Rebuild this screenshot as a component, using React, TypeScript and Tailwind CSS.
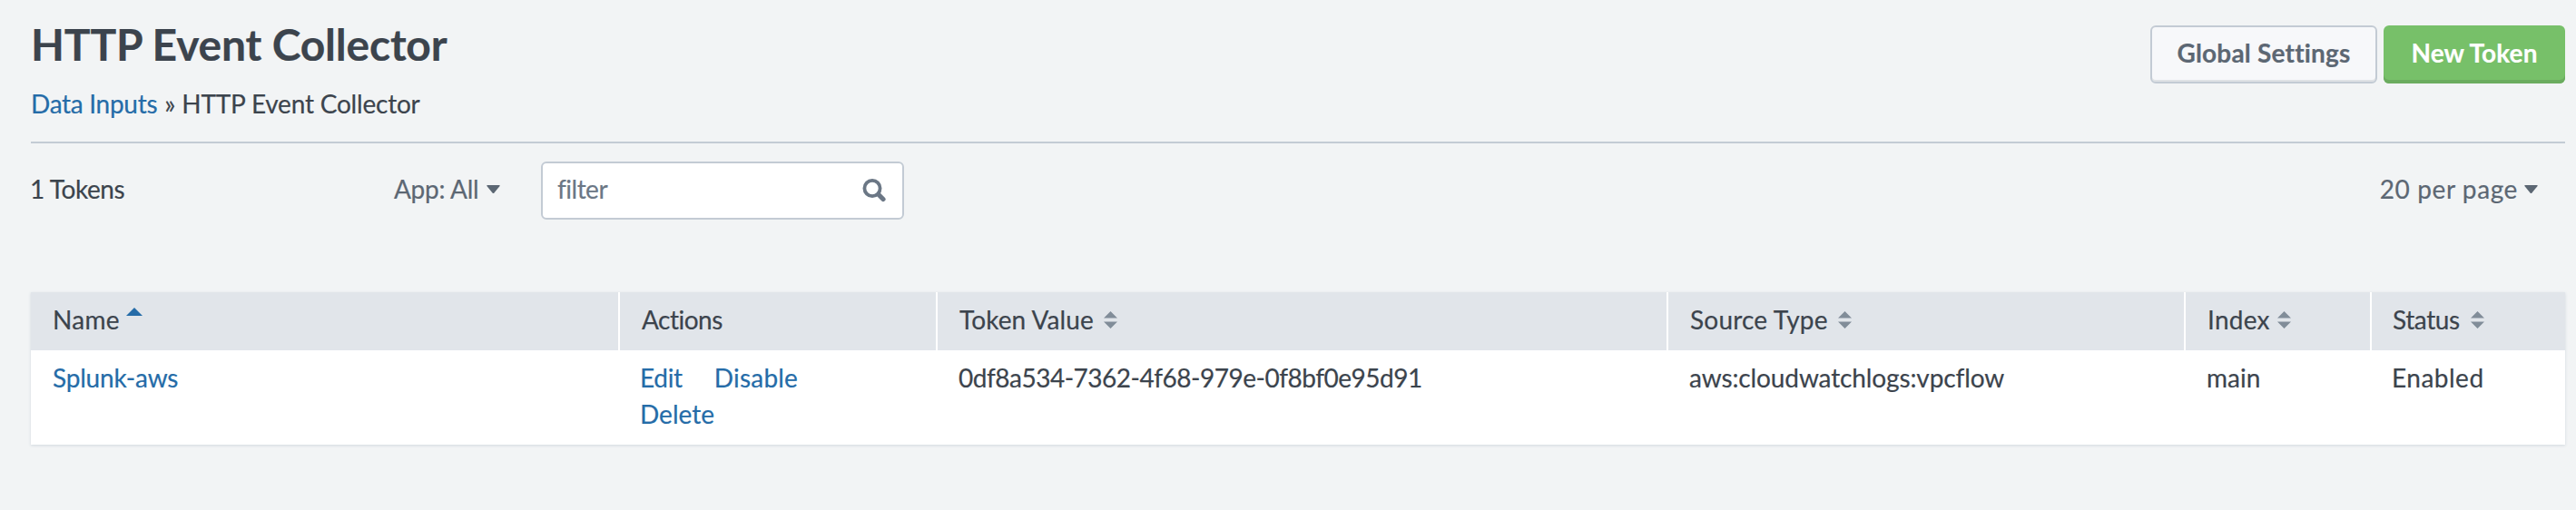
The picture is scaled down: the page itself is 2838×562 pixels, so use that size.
import React from "react";

function Caret() {
  return (
    <svg width="15" height="9" viewBox="0 0 15 9" className="fill-[#5c6773]">
      <path d="M1 0h13q1.2 0 .6 1L8.5 8.4q-1 1-2 0L.4 1Q-.2 0 1 0z" />
    </svg>
  );
}

function SortIcon() {
  return (
    <svg width="15" height="19" viewBox="0 0 15 19" className="mt-[11px] fill-[#818d99]">
      <path d="M7.5 0 15 7.5H0zM0 11.5h15L7.5 19z" />
    </svg>
  );
}

const headCell = "flex items-start border-r-2 border-white pt-[10px]";

export default function App() {
  return (
    <div
      className="h-[562px] w-[2838px] overflow-hidden bg-[#f2f4f5] pl-[34px] pr-3 text-[28px] leading-[40px] text-[#3c444d] [-webkit-text-stroke:0.2px]"
      style={{ fontFamily: "Lato, 'Liberation Sans', sans-serif" }}
    >
      <header className="flex h-[158px] justify-between border-b-2 border-[#c3cbd4]">
        <div className="pt-[21px]">
          <h1 className="text-[48px] font-bold leading-[56px] tracking-[-0.2px]">HTTP Event Collector</h1>
          <nav className="mt-[17px] flex whitespace-pre">
            <a className="tracking-[-0.3px] text-[#256ca8]">Data Inputs</a>
            <span className="ml-2">»</span>
            <span className="ml-[7px] tracking-[-0.2px]">HTTP Event Collector</span>
          </nav>
        </div>
        <div className="flex gap-[7px] pt-7 font-bold">
          <button className="flex h-16 w-[250px] justify-center rounded-md border-2 border-[#c3cbd4] bg-[#f7f8fa] pt-[8px] tracking-[0.2px] text-[#5c6773] shadow-[inset_0_-2px_0_#dfe2e5]">
            Global Settings
          </button>
          <button className="flex h-16 w-[200px] justify-center rounded-md bg-[#77c069] pt-[10px] tracking-[0.1px] text-white shadow-[inset_0_-4px_0_#6bac5f]">
            New Token
          </button>
        </div>
      </header>

      <div className="flex h-[164px] items-start pt-5">
        <div className="w-[400px] pt-[10px] tracking-[-0.4px]">
          <span className="ml-[-1px]">1 Tokens</span>
        </div>
        <div className="flex w-[162px] items-center pt-[10px] tracking-[-0.28px] text-[#5c6773]">
          <span className="mr-[9px]">App: All</span>
          <Caret />
        </div>
        <div className="flex h-16 w-[400px] justify-between rounded-md border-2 border-[#c3cbd4] bg-white pl-4 pr-[17px] pt-2 tracking-[-0.5px] text-[#6b7785]">
          <span>filter</span>
          <svg width="27" height="26" viewBox="0 0 27 26" fill="none" className="mt-[9px] stroke-[#6b7785]">
            <circle cx="11" cy="10.5" r="8.6" strokeWidth="3.8" />
            <path d="M18 17.5l5 5" strokeWidth="5.2" strokeLinecap="round" />
          </svg>
        </div>
        <div className="ml-auto mr-[30px] flex items-center pt-[10px] tracking-[0.6px] text-[#5c6773]">
          <span className="mr-[7px]">20 per page</span>
          <Caret />
        </div>
      </div>

      <section className="h-[168px] bg-white shadow-[0_1px_3px_#d0d7de]">
        <div className="grid h-16 grid-cols-[649px_350px_805px_570px_205px_213px] bg-[#e1e5ea]">
          <div className={headCell + " pl-6"}>
            <span className="tracking-[0.3px]">Name</span>
            <svg width="18" height="9" viewBox="0 0 18 9" className="ml-[7px] mt-[7px] fill-[#256ca8]">
              <path d="M9 0l9 9H0z" />
            </svg>
          </div>
          <div className={headCell + " pl-6"}>
            <span className="tracking-[-0.5px]">Actions</span>
          </div>
          <div className={headCell + " gap-[11px] pl-6"}>
            <span className="tracking-[0.1px]">Token Value</span>
            <SortIcon />
          </div>
          <div className={headCell + " gap-[11px] pl-6"}>
            <span className="tracking-[0.2px]">Source Type</span>
            <SortIcon />
          </div>
          <div className={headCell + " gap-[8px] pl-6"}>
            <span className="tracking-[0.25px]">Index</span>
            <SortIcon />
          </div>
          <div className="flex items-start gap-[12px] pl-[23px] pt-[10px]">
            <span className="tracking-[-0.4px]">Status</span>
            <SortIcon />
          </div>
        </div>
        <div className="grid h-[104px] grid-cols-[649px_350px_805px_570px_205px_213px] pt-[10px]">
          <a className="pl-6 tracking-[-0.2px] text-[#256ca8]">Splunk-aws</a>
          <div className="flex flex-col pl-[22px] text-[#256ca8]">
            <div className="flex gap-[35px]">
              <a className="tracking-[-0.3px]">Edit</a>
              <a className="tracking-[0.2px]">Disable</a>
            </div>
            <a>Delete</a>
          </div>
          <div className="pl-[23px] tracking-[-0.49px]">0df8a534-7362-4f68-979e-0f8bf0e95d91</div>
          <div className="pl-[23px] tracking-[-0.12px]">aws:cloudwatchlogs:vpcflow</div>
          <div className="pl-[23px]">main</div>
          <div className="pl-[22px] tracking-[0.5px]">Enabled</div>
        </div>
      </section>
    </div>
  );
}
